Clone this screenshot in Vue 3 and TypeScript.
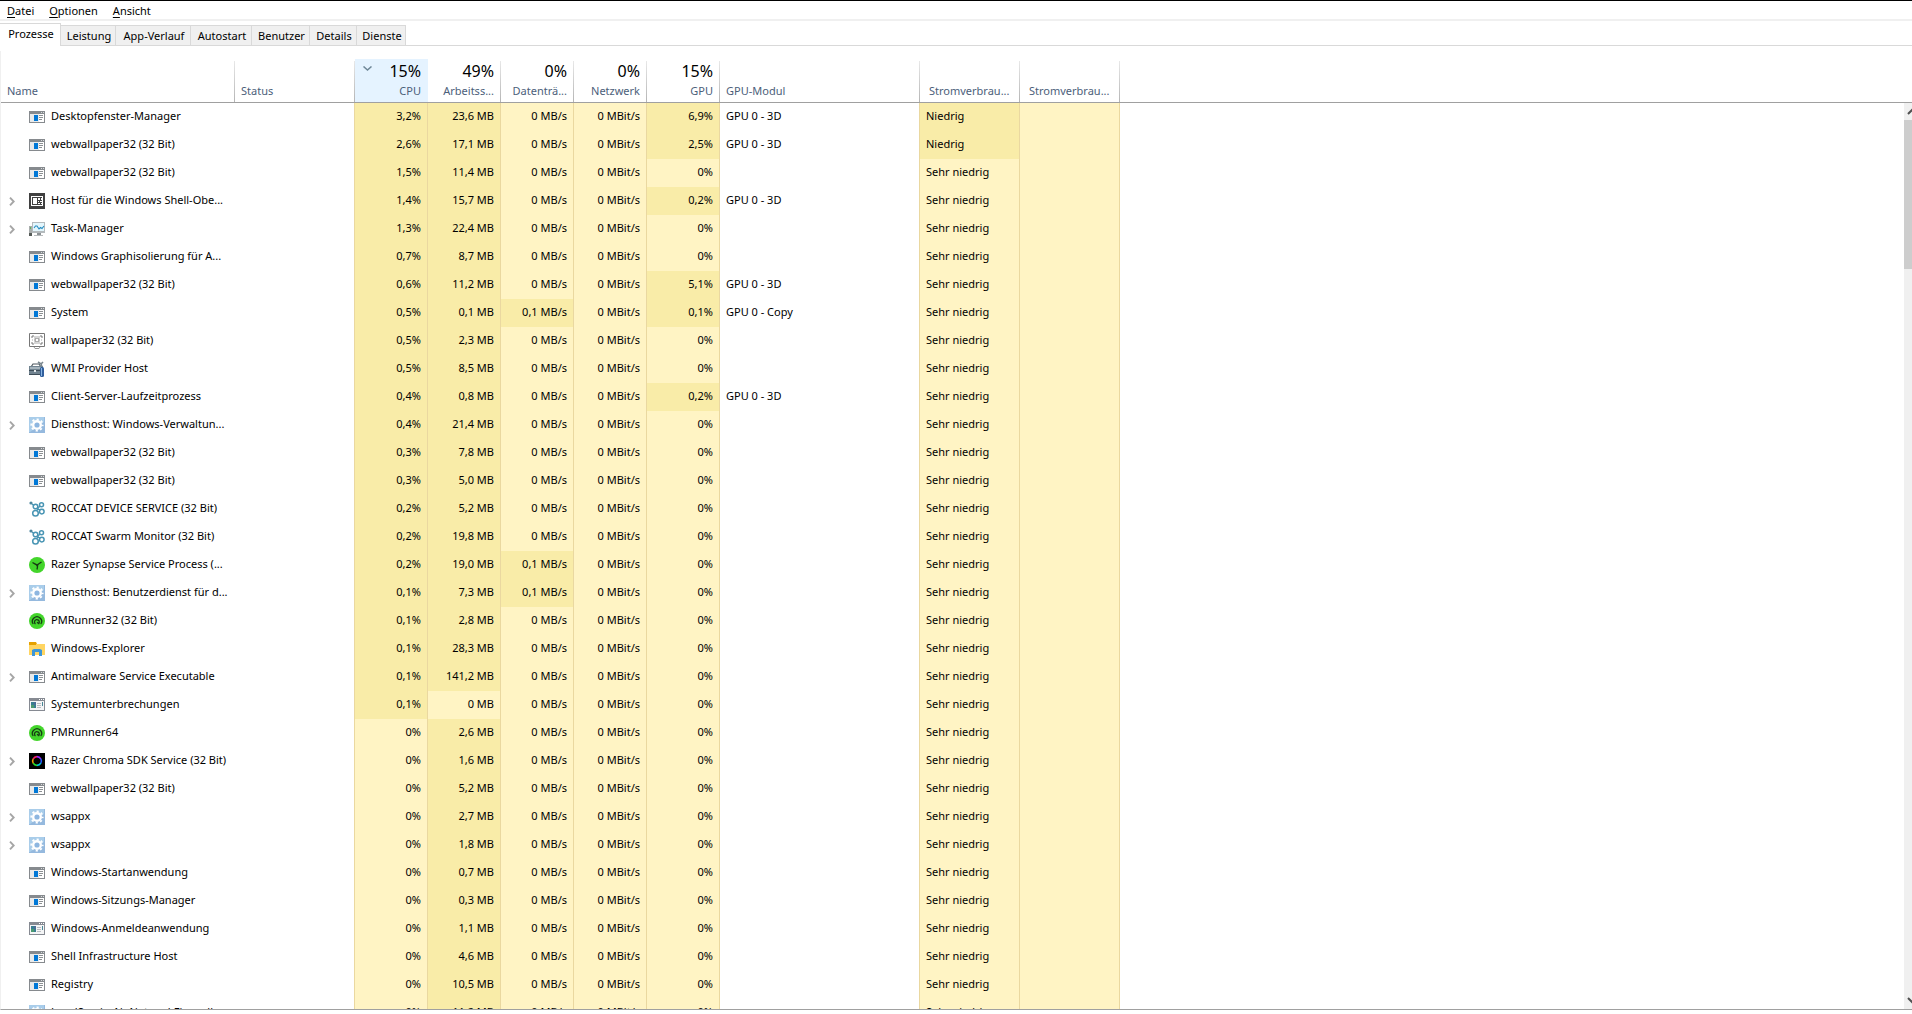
<script setup lang="ts">
type IconName =
  | 'window' | 'shell' | 'task' | 'frame' | 'wmi' | 'gear' | 'roccat'
  | 'razer' | 'runner' | 'folder' | 'legacy' | 'chroma'

interface Process {
  icon: IconName
  name: string
  expandable: boolean
  cpu: string
  memory: string
  disk: string
  network: string
  gpu: string
  engine: string
  power: string
}

const menu = ['Datei', 'Optionen', 'Ansicht']
const tabs = ['Prozesse', 'Leistung', 'App-Verlauf', 'Autostart', 'Benutzer', 'Details', 'Dienste']

function p(
  icon: IconName, name: string, cpu: string, memory: string, expandable = false,
  extra: Partial<Process> = {},
): Process {
  return {
    icon, name, expandable, cpu: cpu + '%', memory: memory + ' MB', disk: '0 MB/s',
    network: '0 MBit/s', gpu: '0%', engine: '', power: 'Sehr niedrig', ...extra,
  }
}

const web = 'webwallpaper32 (32 Bit)'
const processes: Process[] = [
  p('window', 'Desktopfenster-Manager', '3,2', '23,6', false, { gpu: '6,9%', engine: 'GPU 0 - 3D', power: 'Niedrig' }),
  p('window', web, '2,6', '17,1', false, { gpu: '2,5%', engine: 'GPU 0 - 3D', power: 'Niedrig' }),
  p('window', web, '1,5', '11,4'),
  p('shell', 'Host für die Windows Shell-Obe...', '1,4', '15,7', true, { gpu: '0,2%', engine: 'GPU 0 - 3D' }),
  p('task', 'Task-Manager', '1,3', '22,4', true),
  p('window', 'Windows Graphisolierung für A...', '0,7', '8,7'),
  p('window', web, '0,6', '11,2', false, { gpu: '5,1%', engine: 'GPU 0 - 3D' }),
  p('window', 'System', '0,5', '0,1', false, { disk: '0,1 MB/s', gpu: '0,1%', engine: 'GPU 0 - Copy' }),
  p('frame', 'wallpaper32 (32 Bit)', '0,5', '2,3'),
  p('wmi', 'WMI Provider Host', '0,5', '8,5'),
  p('window', 'Client-Server-Laufzeitprozess', '0,4', '0,8', false, { gpu: '0,2%', engine: 'GPU 0 - 3D' }),
  p('gear', 'Diensthost: Windows-Verwaltun...', '0,4', '21,4', true),
  p('window', web, '0,3', '7,8'),
  p('window', web, '0,3', '5,0'),
  p('roccat', 'ROCCAT DEVICE SERVICE (32 Bit)', '0,2', '5,2'),
  p('roccat', 'ROCCAT Swarm Monitor (32 Bit)', '0,2', '19,8'),
  p('razer', 'Razer Synapse Service Process (...', '0,2', '19,0', false, { disk: '0,1 MB/s' }),
  p('gear', 'Diensthost: Benutzerdienst für d...', '0,1', '7,3', true, { disk: '0,1 MB/s' }),
  p('runner', 'PMRunner32 (32 Bit)', '0,1', '2,8'),
  p('folder', 'Windows-Explorer', '0,1', '28,3'),
  p('window', 'Antimalware Service Executable', '0,1', '141,2', true),
  p('legacy', 'Systemunterbrechungen', '0,1', '0'),
  p('runner', 'PMRunner64', '0', '2,6'),
  p('chroma', 'Razer Chroma SDK Service (32 Bit)', '0', '1,6', true),
  p('window', web, '0', '5,2'),
  p('gear', 'wsappx', '0', '2,7', true),
  p('gear', 'wsappx', '0', '1,8', true),
  p('window', 'Windows-Startanwendung', '0', '0,7'),
  p('window', 'Windows-Sitzungs-Manager', '0', '0,3'),
  p('legacy', 'Windows-Anmeldeanwendung', '0', '1,1'),
  p('window', 'Shell Infrastructure Host', '0', '4,6'),
  p('window', 'Registry', '0', '10,5'),
  p('gear', 'LocalServiceNoNetworkFirewall', '0', '11,2', true),
]

const used = (value: string) => !value.startsWith('0 ') && value !== '0%'
</script>

<template>
  <div class="window">
    <nav class="menu">
      <button v-for="m in menu" :key="m" type="button"><u>{{ m[0] }}</u>{{ m.slice(1) }}</button>
    </nav>
    <div class="tabs" role="tablist">
      <button
        v-for="(t, i) in tabs" :key="t" type="button" role="tab"
        :aria-selected="i === 0" :class="{ active: i === 0 }"
      >{{ t }}</button>
    </div>

    <main class="panel">
      <table>
        <colgroup>
          <col class="c-name"><col class="c-status">
          <col v-for="n in 5" :key="n" class="c-num">
          <col class="c-engine"><col class="c-power"><col class="c-power"><col>
        </colgroup>
        <thead>
          <tr>
            <th>Name</th>
            <th>Status</th>
            <th class="num sorted">
              <svg class="sort" viewBox="0 0 9 5"><path d="M.5 .5 4.500 4 8.500 .5" fill="none" stroke="#6f8797" stroke-width="1.500" /></svg>
              <b>15%</b>CPU
            </th>
            <th class="num"><b>49%</b>Arbeitss...</th>
            <th class="num"><b>0%</b>Datenträ...</th>
            <th class="num"><b>0%</b>Netzwerk</th>
            <th class="num"><b>15%</b>GPU</th>
            <th>GPU-Modul</th>
            <th class="power">Stromverbrau...</th>
            <th class="power">Stromverbrau...</th>
            <th class="rest"></th>
          </tr>
        </thead>
        <tbody>
          <tr v-for="(r, i) in processes" :key="i">
            <td class="first">
              <div class="name">
                <span class="toggle">
                  <button v-if="r.expandable" type="button" aria-label="Erweitern">
                    <svg width="6" height="9" viewBox="0 0 6 9"><path d="M1 .7 4.700 4.500 1 8.300" fill="none" stroke="#a6a6a6" stroke-width="1.900" /></svg>
                  </button>
                </span>
                <svg class="icon" width="16" height="16" viewBox="0 0 16 16">
                  <g v-if="r.icon === 'window'">
                    <path fill="#868a8e" d="M0 2h16v12H0z" /><path fill="#e8eaeb" d="M1 5h14v8H1z" />
                    <path fill="#fff" d="M10 5h5v8h-5z" /><path fill="#0078d7" d="M5 6h4v6H5z" />
                    <path fill="#d8dadb" d="M12 3h1v1h-1zM14 3h1v1h-1z" />
                    <path fill="#8c9093" d="M10 6h4v1h-4zM10 8h4v1h-4zM10 10h3v1h-3z" />
                  </g>
                  <g v-else-if="r.icon === 'legacy'">
                    <path fill="#868a92" d="M0 1h16v13H0z" /><path fill="#f4f5f6" d="M1 4h14v9H1z" />
                    <path fill="#fff" d="M10 2h1v1h-1zM12 2h1v1h-1zM14 2h1v1h-1z" />
                    <path fill="#397e91" d="M2 5h5v6H2z" /><path fill="#4b9a70" d="M2 8h3v3H2z" /><path fill="#4b6d96" d="M5 5h2v3H5z" />
                    <path fill="#b9bcc0" d="M8 6h4v1H8zM8 8h4v1H8zM8 10h4v1H8z" /><path fill="#4a8796" d="M13 5h1v4h-1z" />
                  </g>
                  <g v-else-if="r.icon === 'shell'">
                    <path fill="#404040" d="M0 0h16v16H0z" /><path fill="#fff" d="M2 3h12v10H2z" />
                    <path fill="#404040" d="M3 4h10v8H3z" /><path fill="#fff" d="M4 5h4v6H4zM9 5h2v2H9zM9 8h1v1H9zM9 10h2v1H9zM12 5h1v2h-1zM11 8h2v1h-2zM12 10h1v1h-1z" />
                  </g>
                  <g v-else-if="r.icon === 'task'">
                    <path fill="#a9adad" d="M0 5h3v9H0z" /><path fill="#555b58" d="M0 12h3v3H0z" /><path fill="#63b35e" d="M1 6h1v2H1z" />
                    <path fill="#b4babd" d="M3 1h13v11H3z" /><path fill="#e3f6fc" d="M4 2h11v8H4z" />
                    <path fill="#8d9295" d="M8 12h4v2H8z" /><path fill="#b7bbbd" d="M5 14h9v1H5z" />
                    <path d="M5 7l1.500-2L8 5l2 3 1.500-1.500L13 7.500 15 5" fill="none" stroke="#258bc0" stroke-width="1.100" />
                  </g>
                  <g v-else-if="r.icon === 'frame'" fill="none" stroke="#777">
                    <path d="M.5 .5h15v13H.5z" /><path d="M5 14l1 1.500h4l1-1.500" stroke="#999" />
                    <path d="M3 5V3h2M11 3h2v2M3 9v2h2M11 11h2V9" /><circle cx="8" cy="7" r="2" stroke="#888" />
                    <path d="M8 3v1M8 10v1M6 3v8M10 3v8M3 7h1M12 7h1" stroke="#aaa" />
                  </g>
                  <g v-else-if="r.icon === 'wmi'">
                    <path d="M2 6l2-3h6l2 3" fill="none" stroke="#4c565e" stroke-width="1.200" />
                    <path fill="#718390" d="M0 5h14v9H0z" /><path fill="#a6b4bd" d="M1 6h12v2H1z" /><path fill="#3d4c57" d="M0 9h14v1H0zM0 13h13v1H0z" />
                    <path fill="#e5e9ec" d="M5 9h2v2H5z" /><path d="M9 1l3 2 2-2M12 2l1 5" fill="none" stroke="#79868e" stroke-width="1.600" />
                    <rect x="11" y="6" width="4" height="10" rx="1.500" fill="#315f9d" /><path fill="#88b5e4" d="M12 7h1v8h-1z" />
                  </g>
                  <g v-else-if="r.icon === 'gear'">
                    <path fill="#95b9de" d="M0 0h16v16H0z" /><path fill="#a9cdea" d="M0 0h15v5L1 15H0z" />
                    <circle cx="8" cy="8" r="5.700" fill="none" stroke="#fff" stroke-width="1.800" stroke-dasharray="2.200 2.276" stroke-dashoffset="1.100" />
                    <circle cx="8" cy="8" r="3.800" fill="#8db6e0" stroke="#fff" stroke-width="2.400" />
                  </g>
                  <g v-else-if="r.icon === 'roccat'" fill="none" stroke="#4995b4" stroke-width="1.500">
                    <circle cx="6.500" cy="5.500" r="2.300" /><circle cx="12.500" cy="3.800" r="2" /><circle cx="12.800" cy="10.600" r="2.300" />
                    <circle cx="6.500" cy="12.200" r="2.800" /><path d="M8.500 7.500 11 9M8 9.500l1.500-3 1.500-1.500" />
                    <circle cx="2" cy="2" r="1.600" fill="#4d879f" stroke="none" /><path d="M3 3l2 1.500" />
                  </g>
                  <g v-else-if="r.icon === 'razer'">
                    <circle cx="8" cy="8" r="8" fill="#43d52b" />
                    <path d="M3.500 5.500 Q6 7 8 8l4.500-3M8 8q1 2 0 4.500" fill="none" stroke="#173b14" stroke-width="1.400" /><path fill="#173b14" d="M6 7h3.500L9 10z" />
                  </g>
                  <g v-else-if="r.icon === 'runner'">
                    <circle cx="8" cy="8" r="8" fill="#43d52b" />
                    <path d="M4.200 11a4.600 4.600 0 1 1 7.600 0M6.500 11a2.400 2.400 0 1 1 3.300-.5L8 9.200" fill="none" stroke="#173b14" stroke-width="1.300" />
                  </g>
                  <g v-else-if="r.icon === 'folder'">
                    <path fill="#e5a100" d="M0 1h7l1 2v3H0z" /><path fill="#ffd562" d="M0 3h16v11H0z" /><path fill="#e5a100" d="M0 3h7v1H0z" />
                    <path fill="#3d96d8" d="M3 9l2-1h6l2 1v6h-3v-4H6v4H3z" />
                  </g>
                  <g v-else fill="none" stroke-width="1.600">
                    <path fill="#000" d="M0 0h16v16H0z" />
                    <path d="M8 3.600a4.400 4.400 0 0 1 3.800 2.200" stroke="#9a28ff" /><path d="M11.800 5.800a4.400 4.400 0 0 1 0 4.400" stroke="#245bff" />
                    <path d="M11.800 10.200A4.400 4.400 0 0 1 8 12.400" stroke="#00c8d8" /><path d="M8 12.400a4.400 4.400 0 0 1-3.800-2.200" stroke="#25e02c" />
                    <path d="M4.200 10.200a4.400 4.400 0 0 1 0-4.400" stroke="#f0a000" /><path d="M4.200 5.800A4.400 4.400 0 0 1 8 3.600" stroke="#f0206a" />
                  </g>
                </svg>
                <span class="label">{{ r.name }}</span>
              </div>
            </td>
            <td class="status"></td>
            <td class="heat num" :class="{ hot: used(r.cpu) }">{{ r.cpu }}</td>
            <td class="heat num" :class="{ hot: used(r.memory) }">{{ r.memory }}</td>
            <td class="heat num" :class="{ hot: used(r.disk) }">{{ r.disk }}</td>
            <td class="heat num">{{ r.network }}</td>
            <td class="heat num" :class="{ hot: used(r.gpu) }">{{ r.gpu }}</td>
            <td class="engine">{{ r.engine }}</td>
            <td class="heat" :class="{ hot: r.power === 'Niedrig' }">{{ r.power }}</td>
            <td class="heat"></td>
            <td></td>
          </tr>
        </tbody>
      </table>
      <div class="scrollbar" aria-hidden="true">
        <svg class="arrow" width="17" height="17" viewBox="0 0 17 17"><path d="M4 11l4.500-4.500L13 11" fill="none" stroke="#505050" stroke-width="2" /></svg>
        <div class="thumb"></div>
        <svg class="arrow" width="17" height="17" viewBox="0 0 17 17"><path d="M4 6l4.500 4.500L13 6" fill="none" stroke="#505050" stroke-width="2" /></svg>
      </div>
    </main>
  </div>
</template>

<style>
body {
  background: #fff;
  overflow: hidden;
}
</style>

<style scoped>
.window {
  display: flex;
  flex-direction: column;
  box-sizing: border-box;
  height: 100vh;
  padding-bottom: 4px;
  border-top: 1px solid #000;
  font: 11px/16px "Noto Sans", "Open Sans", sans-serif;
  color: #000;
}
button {
  padding: 0;
  border: 0;
  background: none;
  font: inherit;
  color: inherit;
  white-space: nowrap;
}
.menu {
  display: flex;
  gap: 15px;
  height: 18px;
  padding: 0 7px;
  border-bottom: 2px solid #f0f0f0;
}
.menu button {
  padding-top: 2px;
}
.menu u {
  text-underline-offset: 2px;
}
.tabs {
  display: grid;
  grid-template-columns: 61px 55px 75px 61px 58px 47px 49px 1fr;
  align-items: end;
  height: 23px;
  padding-top: 2px;
  box-shadow: inset 0 -1px #d9d9d9;
}
.tabs button {
  height: 21px;
  padding-left: 2px;
  border: 1px solid #d9d9d9;
  border-left: 0;
  background: #f0f0f0;
}
.tabs .active {
  height: 23px;
  padding-bottom: 2px;
  border-bottom: 0;
  background: #fff;
}
.panel {
  position: relative;
  flex: 1;
  min-height: 0;
  margin-top: 5px;
  padding-top: 8px;
  overflow: hidden;
  border-left: 1px solid #f0f0f0;
  border-bottom: 1px solid #a0a0a0;
}
table {
  width: 100%;
  table-layout: fixed;
  border-collapse: separate;
  border-spacing: 0;
}
.c-name { width: 234px; }
.c-status { width: 120px; }
.c-num { width: 73px; }
.c-engine { width: 200px; }
.c-power { width: 100px; }
th {
  position: relative;
  box-sizing: border-box;
  height: 44px;
  padding: 0 6px 4px;
  border-bottom: 1px solid #a0a0a0;
  background: linear-gradient(#e8e8e8, #b4b4b4) right 2px / 1px 42px no-repeat;
  font-size: 11px;
  font-weight: 400;
  line-height: 15px;
  text-align: left;
  vertical-align: bottom;
  white-space: nowrap;
  color: #4c607a;
}
th b {
  display: block;
  font-size: 16px;
  font-weight: 400;
  line-height: 24px;
  color: #000;
}
th.num {
  padding-right: 7px;
}
th.sorted {
  background: #e5f3ff;
}
th.power {
  padding-left: 9px;
}
th.rest {
  background: none;
}
.sort {
  position: absolute;
  top: 7px;
  left: 8px;
  width: 9px;
  height: 5px;
}
.num {
  text-align: right;
}
td {
  box-sizing: border-box;
  height: 28px;
  padding: 0 6px 2px;
  white-space: nowrap;
}
td.first {
  padding-bottom: 0;
}
.name {
  display: flex;
  align-items: center;
}
.label {
  padding-bottom: 2px;
}
.toggle {
  display: flex;
  width: 22px;
}
.toggle button {
  display: flex;
  padding-left: 2px;
}
.icon {
  flex: none;
  margin-right: 6px;
}
.status,
.engine,
.heat {
  border-right: 1px solid #ead8a0;
}
.heat {
  background: #fff4c4;
}
.hot {
  background: #f9eca8;
}
.scrollbar {
  position: absolute;
  top: 52px;
  right: 0;
  bottom: 0;
  display: flex;
  flex-direction: column;
  width: 8px;
  overflow: hidden;
  background: #f0f0f0;
}
.arrow {
  flex: none;
}
.thumb {
  height: 149px;
  margin-bottom: auto;
  background: #cdcdcd;
}
</style>
